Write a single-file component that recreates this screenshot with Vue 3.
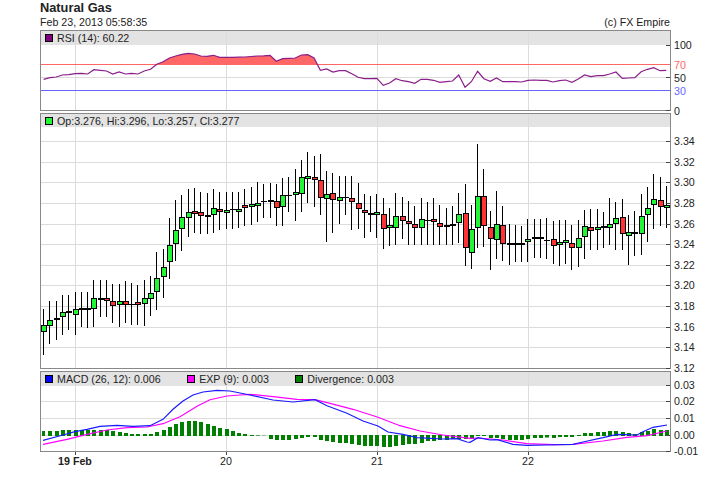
<script setup>
const colX = (i) => Math.floor(43.6 + 6.29 * i);

// high, low, body top, body bottom, up
const candles = [
	[309, 355, 325, 332, 1], [301, 344, 320, 326, 1], [301, 340, 318, 320, 1], [295, 335, 312, 317, 1],
	[295, 330, 311, 313, 1], [292, 335, 309, 315, 1], [292, 327, 308, 310, 1], [292, 328, 308, 310, 1],
	[280, 327, 298, 309, 1], [280, 317, 298, 300, 1], [280, 317, 298, 301, 0], [284, 323, 301, 306, 0],
	[284, 327, 301, 305, 1], [281, 323, 301, 305, 0], [283, 325, 304, 305, 1], [285, 325, 302, 305, 0],
	[280, 326, 298, 304, 1], [276, 316, 293, 299, 1], [252, 310, 278, 292, 1], [249, 298, 267, 277, 1],
	[218, 279, 245, 262, 1], [200, 261, 230, 244, 1], [195, 251, 217, 229, 1], [189, 237, 212, 218, 1],
	[188, 233, 211, 214, 0], [192, 234, 212, 216, 0], [193, 234, 215, 217, 1], [189, 233, 208, 215, 1],
	[192, 230, 209, 212, 0], [192, 229, 210, 213, 1], [192, 229, 209, 210, 1], [192, 228, 209, 212, 1],
	[189, 226, 205, 208, 0], [187, 225, 204, 207, 1], [182, 222, 203, 206, 1], [184, 218, 201, 202, 1],
	[183, 218, 200, 202, 1], [184, 226, 201, 208, 0], [178, 226, 195, 207, 1], [177, 212, 195, 196, 1],
	[169, 221, 192, 195, 1], [160, 212, 177, 194, 1], [152, 203, 176, 179, 1], [156, 207, 177, 180, 0],
	[154, 215, 180, 198, 0], [171, 242, 194, 199, 1], [173, 233, 193, 200, 0], [176, 224, 197, 201, 1],
	[176, 215, 197, 198, 1], [176, 230, 198, 202, 0], [183, 229, 203, 209, 0], [194, 238, 210, 213, 0],
	[196, 232, 213, 215, 1], [194, 238, 212, 215, 1], [198, 249, 214, 229, 0], [208, 246, 225, 228, 1],
	[193, 245, 216, 228, 1], [197, 239, 216, 221, 0], [201, 245, 221, 224, 0], [206, 245, 224, 228, 0],
	[198, 245, 219, 228, 1], [202, 245, 220, 221, 1], [198, 245, 219, 222, 0], [205, 245, 223, 227, 0],
	[208, 245, 225, 227, 1], [206, 245, 224, 226, 1], [193, 243, 214, 223, 1], [184, 266, 213, 248, 0],
	[205, 269, 229, 253, 1], [144, 248, 196, 228, 1], [169, 247, 196, 226, 0], [211, 270, 227, 239, 0],
	[191, 259, 224, 240, 1], [206, 261, 225, 244, 0], [224, 265, 243, 245, 1], [225, 262, 243, 245, 1],
	[226, 262, 243, 245, 0], [219, 262, 239, 242, 1], [219, 258, 237, 239, 1], [219, 258, 237, 239, 0],
	[218, 259, 240, 241, 1], [221, 264, 239, 246, 0], [220, 266, 242, 245, 1], [220, 264, 240, 243, 1],
	[225, 270, 243, 248, 0], [220, 267, 238, 248, 1], [210, 259, 226, 237, 1], [209, 250, 227, 231, 0],
	[209, 250, 227, 230, 1], [212, 248, 226, 228, 0], [198, 245, 224, 228, 1], [202, 250, 218, 224, 1],
	[199, 250, 217, 234, 0], [215, 265, 232, 236, 1], [211, 256, 232, 234, 1], [194, 255, 216, 234, 1],
	[187, 242, 208, 215, 1], [174, 229, 199, 205, 1], [177, 226, 200, 207, 0], [186, 228, 205, 208, 1],
];

const rsi = [
	79.3, 77.7, 77, 75, 74.7, 73.7, 73.3, 74, 69.7, 70.3, 71, 74, 72, 74, 73.3, 74, 71, 69.3, 64.3, 61.7,
	58, 56, 54.3, 53.3, 54, 56, 56.3, 55.3, 57.3, 57.3, 57.3, 57.2, 57, 56.5, 56, 55.8, 55.3, 61.3, 58.7, 58.3,
	58, 55, 54.7, 58, 70.3, 69, 72, 70.7, 70.7, 73.7, 77.3, 78.7, 78.7, 78.3, 85.3, 83, 78.7, 80.7, 81.7, 83.3,
	79.3, 79.3, 80.3, 82.3, 81.7, 81, 75, 87.3, 81.7, 71.3, 78.7, 81.3, 78, 81.7, 81.7, 81.7, 82, 80.3, 80, 80.3,
	80.3, 82, 80.7, 80, 82.3, 79, 75, 76.7, 75.7, 75.7, 74, 72, 78.3, 78, 77.7, 71.7, 69.3, 67.7, 70.7, 70.3,
];

const rsiPoints = rsi.map((y, i) => `${43.6 + 6.29 * i},${y}`).join(" ");
const rsiArea = `43.6,65 ${rsiPoints} 666.3,65`;

const macdLine = "43,440.3 63,435 75,431.7 87,429.3 100,426.3 117,425.3 133,426.3 150,425.7 163,419.3 173,409.3 183,401 193,395 203,392 217,390.3 230,391 250,395 273,400 293,402 315,399.7 327,405.7 347,413.3 363,421 378,426 388,432 403,434.3 417,437.7 443,439 457,438.7 467,442 470,442.3 478,437.7 490,440 497,439.7 513,444.3 527,445.3 547,445 573,444.3 583,442 603,437.7 617,434.3 637,435 643,431.7 653,427.3 667,425";
const expLine = "43,444.3 67,439.3 87,434.3 107,430 127,427.7 147,427 163,423.7 180,416.7 197,406.3 210,399.7 227,396 240,395 250,394.3 273,396.7 297,399.3 315,399.7 330,403.3 353,409.3 378,417.3 400,425.7 420,431 443,435 470,438.3 478,438 503,440 527,443.7 553,444.7 573,444.3 603,441 627,437.3 647,435.7 667,431";

// divergence bars, pixel offsets from the zero row (up is positive)
const bars = [
	5, 5, 5, 6, 6, 6, 6, 6, 6, 6, 6, 5, 4, 3, 2, 2, 2, 2, 4, 6,
	9, 12, 14, 15, 15, 14, 12, 10, 8, 7, 5, 3, 2, 1, 0.6, 0.3, -3, -4, -4, -4,
	-3, -2, -1, -1, -4, -5, -6, -7, -7, -8, -9, -10, -10, -10, -11, -11, -10, -9, -8, -8,
	-7, -5, -5, -4, -4, -3, -3, -3, -3, 1, 1, -2, -2, -3, -4, -4, -4, -3, -2, -2,
	-1.5, -2, -1, -1, -1, 1, 3, 3, 4, 4, 5, 5, 4, 3, 2, 4, 5, 7, 6, 6,
];

const dayCols = [75, 226, 377, 528];
const priceRows = [
	[3.34, 141], [3.32, 162], [3.3, 182], [3.28, 203], [3.26, 224], [3.24, 244],
	[3.22, 265], [3.2, 285], [3.18, 306], [3.16, 327], [3.14, 347], [3.12, 368],
];
const macdRows = [
	["0.03", 385], ["0.02", 401], ["0.01", 418], ["0.00", 435], ["-0.01", 451],
];
</script>

<template>
	<div class="page">
		<h1 class="title">Natural Gas</h1>
		<div class="meta">
			<span>Feb 23, 2013 05:58:35</span>
			<span>(c) FX Empire</span>
		</div>

		<section class="panel rsi">
			<div class="legend">
				<span class="item"><i class="swatch purple"></i>RSI (14): 60.22</span>
			</div>
			<svg width="710" height="81" viewBox="0 30 710 81">
				<defs>
					<clipPath id="above70"><rect x="41" y="31" width="629" height="34" /></clipPath>
				</defs>
				<rect x="41" y="31" width="629" height="14" fill="#e3e3e3" />
				<rect v-for="x in dayCols" :key="x" :x="x" y="31" width="1" height="79" class="grid" />
				<rect x="41" y="77" width="629" height="1" class="grid" />
				<polygon :points="rsiArea" fill="#ff6666" clip-path="url(#above70)" />
				<rect x="41" y="64" width="629" height="1" fill="#ff6666" />
				<rect x="41" y="90" width="629" height="1" fill="#6666ff" />
				<polyline :points="rsiPoints" fill="none" stroke="#8a1f8a" stroke-width="1.2" />
				<rect x="40.5" y="30.5" width="630" height="80" class="frame" />
				<rect x="666" y="45" width="4" height="1" class="tick" />
				<rect x="666" y="77" width="4" height="1" class="tick" />
				<rect x="666" y="110" width="4" height="1" class="tick" />
				<text x="674" y="49">100</text>
				<text x="674" y="69" class="red">70</text>
				<text x="674" y="82">50</text>
				<text x="674" y="95" class="violet">30</text>
				<text x="674" y="115">0</text>
			</svg>
		</section>

		<section class="panel price">
			<div class="legend">
				<span class="item"><i class="swatch green"></i>Op:3.276, Hi:3.296, Lo:3.257, Cl:3.277</span>
			</div>
			<svg width="710" height="256" viewBox="0 113 710 256">
				<defs>
					<clipPath id="plotArea"><rect x="41" y="114" width="629" height="254" /></clipPath>
				</defs>
				<rect x="41" y="114" width="629" height="13" fill="#e3e3e3" />
				<rect v-for="x in dayCols" :key="x" :x="x" y="114" width="1" height="254" class="grid" />
				<rect v-for="row in priceRows.slice(0, 11)" :key="row[0]" x="41" :y="row[1]" width="629" height="1" class="grid" />
				<g clip-path="url(#plotArea)">
					<g v-for="(c, i) in candles" :key="i">
						<rect :x="colX(i)" :y="c[0]" width="1" :height="c[1] - c[0]" fill="#000" />
						<rect :x="colX(i) - 2" :y="c[2]" width="6" :height="c[3] - c[2]" fill="#000" />
						<rect
							v-if="c[3] - c[2] > 2"
							:x="colX(i) - 1"
							:y="c[2] + 1"
							width="4"
							:height="c[3] - c[2] - 2"
							:fill="c[4] ? '#22f533' : '#ff3333'"
						/>
					</g>
				</g>
				<rect x="40.5" y="113.5" width="630" height="255" class="frame" />
				<template v-for="row in priceRows" :key="row[0]">
					<rect x="666" :y="row[1]" width="4" height="1" class="tick" />
					<text x="674" :y="row[1] + 4">{{ row[0].toFixed(2) }}</text>
				</template>
			</svg>
		</section>

		<section class="panel macd">
			<div class="legend">
				<span class="item"><i class="swatch blue"></i>MACD (26, 12): 0.006</span>
				<span class="item"><i class="swatch pink"></i>EXP (9): 0.003</span>
				<span class="item"><i class="swatch dark"></i>Divergence: 0.003</span>
			</div>
			<svg width="710" height="100" viewBox="0 371 710 100">
				<rect x="41" y="372" width="629" height="14" fill="#e3e3e3" />
				<rect v-for="x in dayCols" :key="x" :x="x" y="372" width="1" height="79" class="grid" />
				<rect x="41" y="401" width="629" height="1" class="grid" />
				<rect x="41" y="418" width="629" height="1" class="grid" />
				<rect x="41" y="435" width="629" height="1" class="grid" />
				<rect
					v-for="(b, i) in bars"
					:key="i"
					:x="Math.max(colX(i) - 1, 41)"
					:y="b > 0 ? 436 - b : 435"
					:width="i === 0 ? 3 : 4"
					:height="b > 0 ? b : 1 - b"
					fill="#007f00"
				/>
				<polyline :points="expLine" fill="none" stroke="#ff00ff" stroke-width="1.2" />
				<polyline :points="macdLine" fill="none" stroke="#1a1aff" stroke-width="1.2" />
				<rect x="40.5" y="371.5" width="630" height="80" class="frame" />
				<template v-for="row in macdRows" :key="row[0]">
					<rect x="666" :y="row[1]" width="4" height="1" class="tick" />
					<text x="674" :y="row[1] + 4">{{ row[0] }}</text>
				</template>
				<rect v-for="x in dayCols" :key="x" :x="x" y="452" width="1" height="3" class="tick" />
				<text x="75" y="465" text-anchor="middle" font-weight="bold">19 Feb</text>
				<text x="226" y="465" text-anchor="middle">20</text>
				<text x="377" y="465" text-anchor="middle">21</text>
				<text x="528" y="465" text-anchor="middle">22</text>
			</svg>
		</section>
	</div>
</template>

<style scoped>
.page {
	width: 710px;
	height: 487px;
	overflow: hidden;
	background: #fff;
	color: #222;
	font-family: "Liberation Sans", Arial, sans-serif;
	font-size: 10.67px;
}

.title {
	margin: 0;
	padding: 0 0 0 40px;
	height: 15px;
	line-height: 15px;
	font-size: 12.8px;
	font-weight: bold;
}

.meta {
	display: flex;
	justify-content: space-between;
	width: 630px;
	height: 15px;
	margin-left: 40px;
	line-height: 15px;
}

.panel {
	position: relative;
	line-height: 0;
	margin-bottom: 2px;
}

svg {
	display: block;
	overflow: visible;
}

svg text {
	font-family: "Liberation Sans", Arial, sans-serif;
	font-size: 10.67px;
	fill: #222;
}

svg text.red {
	fill: #ff6666;
}

svg text.violet {
	fill: #6666ff;
}

.grid {
	fill: #dcdcdc;
}

.tick {
	fill: #444;
}

.frame {
	fill: none;
	stroke: #888;
	stroke-width: 1;
}

.legend {
	position: absolute;
	top: 1px;
	left: 45px;
	display: flex;
	gap: 26.5px;
	height: 14px;
	align-items: center;
	line-height: 14px;
	white-space: nowrap;
}

.item {
	display: flex;
	align-items: center;
	gap: 4px;
}

.swatch {
	display: block;
	width: 8px;
	height: 8px;
	outline: 1px solid #000;
	outline-offset: -1px;
}

.purple {
	background: #800080;
}

.green {
	background: #22f533;
}

.blue {
	background: #0000ff;
}

.pink {
	background: #ff00ff;
}

.dark {
	background: #007f00;
}
</style>
